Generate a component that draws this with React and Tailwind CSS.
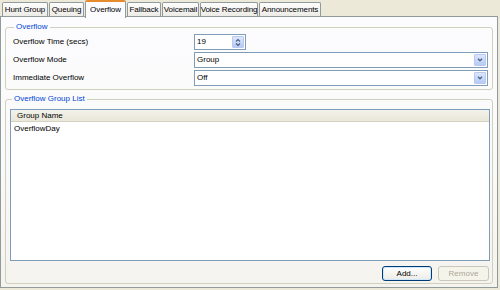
import React from "react";

const tabs = [
  ["Hunt Group", "w-[46px]"],
  ["Queuing", "w-[35px]"],
  ["Overflow", "w-[41px]"],
  ["Fallback", "w-[34px]"],
  ["Voicemail", "w-[37px]"],
  ["Voice Recording", "w-[58px]"],
  ["Announcements", "w-[62px]"],
];

function Tab({ label, w, active }) {
  if (active) {
    return (
      <div className={`relative z-10 -mb-px flex h-[18px] shrink-0 items-center justify-center self-start whitespace-nowrap rounded-t-[2px] border border-b-0 border-[#919b9c] border-t-2 border-t-[#e68b2c] bg-[#fcfcfe] tracking-[-0.1px] ${w}`}>
        {label}
      </div>
    );
  }
  return (
    <div className={`mt-[2px] flex h-[14px] shrink-0 items-center justify-center whitespace-nowrap rounded-t-[2px] border border-b-0 border-[#919b9c] bg-gradient-to-b from-[#fefefe] to-[#ecebe6] tracking-[-0.1px] ${w}`}>
      {label}
    </div>
  );
}

function Chevron() {
  return (
    <div className="flex h-full w-[12px] items-center justify-center rounded-[1px] border border-[#b9c9ef] bg-gradient-to-b from-[#dce6fb] to-[#b6cbf5]">
      <svg width="6" height="4" viewBox="0 0 6 4">
        <path d="M1 0.8 L3 2.8 L5 0.8" stroke="#4d6185" strokeWidth="1.3" fill="none" />
      </svg>
    </div>
  );
}

function Select({ value }) {
  return (
    <div className="flex h-[16px] flex-1 items-center border border-[#7f9db9] bg-white py-px pl-[2px] pr-px">
      <span className="flex-1">{value}</span>
      <Chevron />
    </div>
  );
}

export default function App() {
  return (
    <div
      className="flex h-[290px] w-[500px] flex-col bg-[#ece9d8] text-[8px] leading-none text-black"
      style={{ fontFamily: "'Liberation Sans', Arial, sans-serif" }}
    >
      <div className="flex h-[16px] items-end gap-[1px] pl-[2px]">
        {tabs.map(([t, w]) => (
          <Tab key={t} label={t} w={w} active={t === "Overflow"} />
        ))}
      </div>
      <div className="mb-[2px] mr-[2px] flex flex-1 flex-col gap-[5px] border border-[#919b9c] bg-gradient-to-b from-[#fcfcfe] via-[#fafafa] to-[#f4f3ee] px-[4px] pb-[3px] pt-[6px]">
        <fieldset className="rounded-[3px] border border-[#d0d0bf] pb-[3px] pl-[7px] pr-[4px] pt-[3px]">
          <legend className="ml-[1px] px-[2px] text-[#0046d5]">Overflow</legend>
          <div className="flex flex-col gap-[2px]">
            <div className="flex h-[16px] items-center">
              <span className="w-[181px]">Overflow Time (secs)</span>
              <div className="flex h-[16px] w-[52px] items-center border border-[#7f9db9] bg-white py-px pl-[2px] pr-px">
                <span className="flex-1">19</span>
                <div className="flex h-full w-[12px] flex-col items-center justify-center rounded-[1px] border border-[#b9c9ef] bg-gradient-to-b from-[#dce6fb] to-[#b6cbf5]">
                  <svg width="6" height="9" viewBox="0 0 6 9">
                    <path d="M1 3.5 L3 1.5 L5 3.5" stroke="#4d6185" strokeWidth="1.2" fill="none" />
                    <path d="M1 5.5 L3 7.5 L5 5.5" stroke="#4d6185" strokeWidth="1.2" fill="none" />
                  </svg>
                </div>
              </div>
            </div>
            <div className="flex h-[16px] items-center">
              <span className="w-[181px]">Overflow Mode</span>
              <Select value="Group" />
            </div>
            <div className="flex h-[16px] items-center">
              <span className="w-[181px]">Immediate Overflow</span>
              <Select value="Off" />
            </div>
          </div>
        </fieldset>
        <fieldset className="flex flex-1 flex-col rounded-[3px] border border-[#d0d0bf] pb-[2px] pl-[4px] pr-[2px] pt-[6px]">
          <legend className="ml-[2px] px-[2px] text-[#0046d5]">Overflow Group List</legend>
          <div className="flex flex-1 flex-col border border-[#7f9db9] bg-white">
            <div className="flex h-[12px] items-center border-b border-[#d6d2c2] bg-gradient-to-b from-[#f3f2eb] to-[#e9e7d9] pl-[6px]">
              Group Name
            </div>
            <div className="flex h-[13px] items-center pl-[3px]">OverflowDay</div>
          </div>
          <div className="mt-[5px] flex justify-end gap-[6px] pr-px">
            <button className="h-[15px] w-[50px] rounded-[3px] border border-[#003c74] bg-gradient-to-b from-[#ffffff] to-[#ecebe6] shadow-[inset_0_0_0_1px_#cee7ff]">
              Add...
            </button>
            <button className="h-[15px] w-[51px] rounded-[3px] border border-[#c9c7ba] bg-[#f5f4ea] text-[#aca899]">
              Remove
            </button>
          </div>
        </fieldset>
      </div>
    </div>
  );
}
